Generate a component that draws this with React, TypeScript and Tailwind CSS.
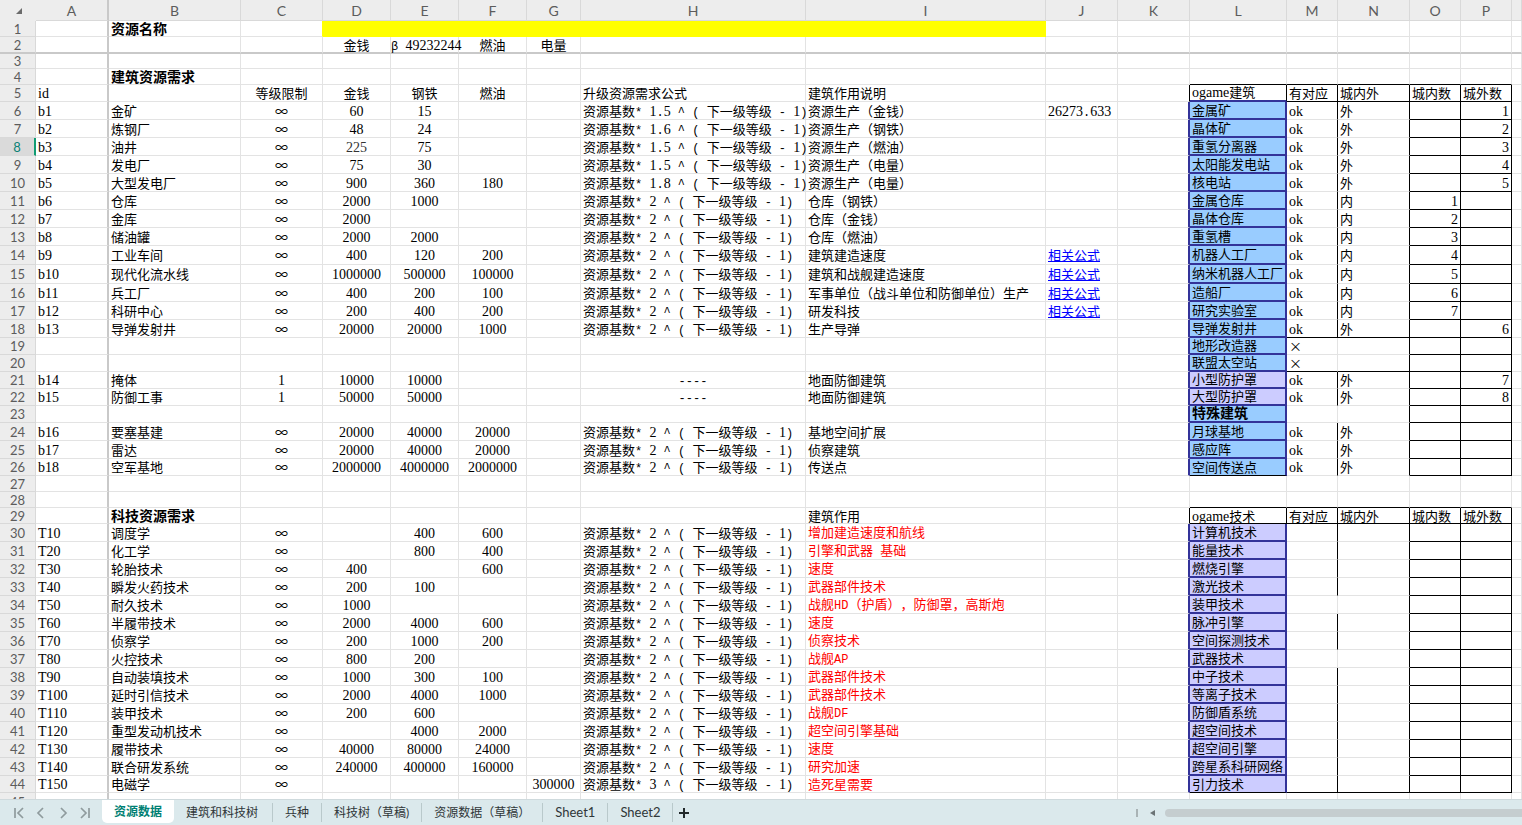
import React from "react";

type Cells = Record<string, string>;
type Row = { n: number; h: string; cells: Cells };

const COLUMNS = ["A", "B", "C", "D", "E", "F", "G", "H", "I", "J", "K", "L", "M", "N", "O", "P", ""];

const COL_WIDTH: Record<string, string> = {
  A: "w-[73px]",
  B: "w-[132px]",
  C: "w-[82px]",
  D: "w-[68px]",
  E: "w-[68px]",
  F: "w-[68px]",
  G: "w-[54px]",
  H: "w-[225px]",
  I: "w-[240px]",
  J: "w-[72px]",
  K: "w-[72px]",
  L: "w-[97px]",
  M: "w-[51px]",
  N: "w-[72px]",
  O: "w-[51px]",
  P: "w-[51px]",
};

const H15 = "h-[15px]";
const H16 = "h-[16px]";
const H17 = "h-[17px]";
const H18 = "h-[18px]";
const H19 = "h-[19px]";

const cost = (base: string) => `资源基数* ${base} ^ ( 下一级等级 - 1)`;
const C2 = cost("2");
const LINK = "相关公式";

const row = (n: number, h: string, cells: Cells = {}): Row => ({ n, h, cells });

const building = (
  n: number, h: string, A: string, B: string, D: string, E: string, F: string,
  H: string, I: string, L: string, N: string, O: string, P: string, J = "",
) => row(n, h, { A, B, C: "∞", D, E, F, H, I, J, L, M: "ok", N, O, P });

const tech = (
  n: number, h: string, A: string, B: string, D: string, E: string, F: string,
  I: string, L: string, G = "", H = C2,
) => row(n, h, { A, B, C: "∞", D, E, F, G, H, I, L });

const ROWS: Row[] = [
  row(1, H16, { B: "资源名称" }),
  row(2, H17, { D: "金钱", E: "β 49232244", F: "燃油", G: "电量" }),
  row(3, H15),
  row(4, H16, { B: "建筑资源需求" }),
  row(5, H17, {
    A: "id", C: "等级限制", D: "金钱", E: "钢铁", F: "燃油", H: "升级资源需求公式", I: "建筑作用说明",
    L: "ogame建筑", M: "有对应", N: "城内外", O: "城内数", P: "城外数",
  }),
  building(6, H18, "b1", "金矿", "60", "15", "", cost("1.5"), "资源生产（金钱）", "金属矿", "外", "", "1", "26273.633"),
  building(7, H18, "b2", "炼钢厂", "48", "24", "", cost("1.6"), "资源生产（钢铁）", "晶体矿", "外", "", "2"),
  building(8, H18, "b3", "油井", "225", "75", "", cost("1.5"), "资源生产（燃油）", "重氢分离器", "外", "", "3"),
  building(9, H18, "b4", "发电厂", "75", "30", "", cost("1.5"), "资源生产（电量）", "太阳能发电站", "外", "", "4"),
  building(10, H18, "b5", "大型发电厂", "900", "360", "180", cost("1.8"), "资源生产（电量）", "核电站", "外", "", "5"),
  building(11, H18, "b6", "仓库", "2000", "1000", "", C2, "仓库（钢铁）", "金属仓库", "内", "1", ""),
  building(12, H18, "b7", "金库", "2000", "", "", C2, "仓库（金钱）", "晶体仓库", "内", "2", ""),
  building(13, H18, "b8", "储油罐", "2000", "2000", "", C2, "仓库（燃油）", "重氢槽", "内", "3", ""),
  building(14, H19, "b9", "工业车间", "400", "120", "200", C2, "建筑建造速度", "机器人工厂", "内", "4", "", LINK),
  building(15, H19, "b10", "现代化流水线", "1000000", "500000", "100000", C2, "建筑和战舰建造速度", "纳米机器人工厂", "内", "5", "", LINK),
  building(16, H18, "b11", "兵工厂", "400", "200", "100", C2, "军事单位（战斗单位和防御单位）生产", "造船厂", "内", "6", "", LINK),
  building(17, H18, "b12", "科研中心", "200", "400", "200", C2, "研发科技", "研究实验室", "内", "7", "", LINK),
  building(18, H18, "b13", "导弹发射井", "20000", "20000", "1000", C2, "生产导弹", "导弹发射井", "外", "", "6"),
  row(19, H17, { L: "地形改造器", M: "×" }),
  row(20, H17, { L: "联盟太空站", M: "×" }),
  row(21, H17, { A: "b14", B: "掩体", C: "1", D: "10000", E: "10000", H: "----", I: "地面防御建筑", L: "小型防护罩", M: "ok", N: "外", P: "7" }),
  row(22, H17, { A: "b15", B: "防御工事", C: "1", D: "50000", E: "50000", H: "----", I: "地面防御建筑", L: "大型防护罩", M: "ok", N: "外", P: "8" }),
  row(23, H17, { L: "特殊建筑" }),
  building(24, H18, "b16", "要塞基建", "20000", "40000", "20000", C2, "基地空间扩展", "月球基地", "外", "", ""),
  building(25, H18, "b17", "雷达", "20000", "40000", "20000", C2, "侦察建筑", "感应阵", "外", "", ""),
  building(26, H17, "b18", "空军基地", "2000000", "4000000", "2000000", C2, "传送点", "空间传送点", "外", "", ""),
  row(27, H16),
  row(28, H16),
  row(29, H16, { B: "科技资源需求", I: "建筑作用", L: "ogame技术", M: "有对应", N: "城内外", O: "城内数", P: "城外数" }),
  tech(30, H18, "T10", "调度学", "", "400", "600", "增加建造速度和航线", "计算机技术"),
  tech(31, H18, "T20", "化工学", "", "800", "400", "引擎和武器 基础", "能量技术"),
  tech(32, H18, "T30", "轮胎技术", "400", "", "600", "速度", "燃烧引擎"),
  tech(33, H18, "T40", "瞬发火药技术", "200", "100", "", "武器部件技术", "激光技术"),
  tech(34, H18, "T50", "耐久技术", "1000", "", "", "战舰HD（护盾），防御罩，高斯炮", "装甲技术"),
  tech(35, H18, "T60", "半履带技术", "2000", "4000", "600", "速度", "脉冲引擎"),
  tech(36, H18, "T70", "侦察学", "200", "1000", "200", "侦察技术", "空间探测技术"),
  tech(37, H18, "T80", "火控技术", "800", "200", "", "战舰AP", "武器技术"),
  tech(38, H18, "T90", "自动装填技术", "1000", "300", "100", "武器部件技术", "中子技术"),
  tech(39, H18, "T100", "延时引信技术", "2000", "4000", "1000", "武器部件技术", "等离子技术"),
  tech(40, H18, "T110", "装甲技术", "200", "600", "", "战舰DF", "防御盾系统"),
  tech(41, H18, "T120", "重型发动机技术", "", "4000", "2000", "超空间引擎基础", "超空间技术"),
  tech(42, H18, "T130", "履带技术", "40000", "80000", "24000", "速度", "超空间引擎"),
  tech(43, H18, "T140", "联合研发系统", "240000", "400000", "160000", "研究加速", "跨星系科研网络"),
  tech(44, H17, "T150", "电磁学", "", "", "", "造死星需要", "引力技术", "300000", cost("3")),
  row(45, H18),
];

const within = (n: number, a: number, b: number) => n >= a && n <= b;

function rightBorder(n: number, c: string): string {
  const listBody = within(n, 6, 26) || within(n, 30, 44);
  const listHead = n === 5 || n === 29;
  if (c === "A") return "border-r-2 border-r-[#c9c9c9]";
  if (c === "C" && n === 1) return "border-r border-r-[#ffff00]";
  if ((c === "K" || c === "L") && listBody) return "border-r-2 border-r-[#333399]";
  if ((c === "K" || c === "L") && listHead) return "border-r border-r-black";
  if (c === "M") {
    const open = n === 19 || n === 20 || n === 23 || n === 34 || n === 37;
    if ((listBody || listHead) && !open) return "border-r border-r-black";
  }
  if ((c === "N" || c === "O" || c === "P") && (listBody || listHead)) return "border-r border-r-black";
  return "border-r border-r-[#e3e3e3]";
}

function bottomBorder(n: number, c: string): string {
  if (n === 2) return "border-b-2 border-b-[#c9c9c9]";
  const inBox = c !== "" && c >= "L";
  if (inBox && (n === 4 || n === 28 || n === 29 || n === 44)) return "border-b border-b-black";
  if (c === "L") {
    if (n === 26) return "border-b border-b-black";
    if (within(n, 5, 25) || within(n, 30, 43)) return "border-b-2 border-b-[#333399]";
  }
  if ((c === "M" || c === "N") && (n === 5 || n === 18 || n === 20)) return "border-b border-b-black";
  if ((c === "O" || c === "P") && (within(n, 5, 26) || within(n, 30, 43))) return "border-b border-b-black";
  return "border-b border-b-[#e3e3e3]";
}

function fill(n: number, c: string): string {
  if (c !== "L") return "";
  if (n === 21 || n === 22 || within(n, 30, 44)) return "bg-[#ccccff]";
  if (within(n, 6, 26)) return "bg-[#99ccff]";
  return "";
}

function align(n: number, c: string, text: string): string {
  if (c === "E" && n === 2) return "px-0 text-left";
  if ((c === "O" || c === "P") && n !== 5 && n !== 29) return "px-[2px] text-right";
  if (c === "C" || c === "D" || c === "E" || c === "F" || c === "G" || text === "----") return "px-0 text-center";
  return "px-[2px] text-left";
}

function tone(n: number, c: string): string {
  if (c === "I" && n >= 30) return "text-[#ff0000]";
  if (c === "D" && n === 8) return "text-[#333333]";
  return "text-black";
}

/** Rows of odd height and the coloured lists keep more room below their text. */
function leading(n: number, c: string, h: string): string {
  const list = c === "L" && n !== 5 && n !== 29;
  const note = c === "I" && n >= 30;
  const raised = list || note || h === H19 || (h === H17 && n !== 2);
  return raised ? "pt-0 pb-[2px] leading-[13px]" : "py-0 leading-[15px]";
}

const isHeading = (n: number, c: string) =>
  (c === "B" && (n === 1 || n === 4 || n === 29)) || (c === "L" && n === 23);

/** Sets digits and letters in a serif face and half-width marks in a fixed-width one. */
function Mixed({ text }: { text: string }) {
  const parts = text.match(/[0-9a-zT]+|[A-Zβ *.^()-]+|[^0-9a-zA-Zβ *.^()-]+/g) ?? [];
  return (
    <>
      {parts.map((p, i) => {
        if (/^[0-9a-zT]/.test(p))
          return <span key={i} className="font-['Liberation_Serif',serif] text-[14px] leading-[0px]">{p}</span>;
        if (/^[A-Zβ *.^()-]/.test(p))
          return <span key={i} className="font-['Liberation_Mono',monospace] text-[12px] leading-[0px]">{p}</span>;
        return <React.Fragment key={i}>{p}</React.Fragment>;
      })}
    </>
  );
}

function Cell({ n, c, h, text }: { n: number; c: string; h: string; text: string }) {
  const size = isHeading(n, c) ? "text-[14px] font-bold" : "text-[13px]";
  return (
    <td
      className={`align-middle whitespace-pre [text-spacing-trim:space-all] ${size} ${leading(n, c, h)} ${rightBorder(n, c)} ${bottomBorder(n, c)} ${fill(n, c)} ${align(n, c, text)} ${tone(n, c)}`}
    >
      {text === LINK ? (
        <a href="#formula" className="text-[#0000ff] underline underline-offset-1">{text}</a>
      ) : (
        <Mixed text={text} />
      )}
    </td>
  );
}

function Grid() {
  return (
    <table className="w-full table-fixed border-separate border-spacing-0 font-['Noto_Sans_CJK_SC',sans-serif]">
      <colgroup>
        <col className="w-[36px]" />
        {COLUMNS.map((c) => (
          <col key={c} className={COL_WIDTH[c]} />
        ))}
      </colgroup>
      <thead className="bg-[#ededed] font-['Lato',sans-serif] text-[14px] text-[#5c5c5c]">
        <tr className="h-[21px]">
          <th className="p-0 text-left">
            <button type="button" aria-label="全选" className="block pl-[16px]">
              <svg width="6" height="6" viewBox="0 0 6 6"><path d="M6 0V6H0Z" fill="#6b6b6b" /></svg>
            </button>
          </th>
          {COLUMNS.map((c) => (
            <th
              key={c}
              scope="col"
              className={`border-b border-b-[#d9d9d9] px-0 pt-[2px] pb-0 text-center leading-[18px] font-normal ${c === "A" ? "border-r-2 border-r-[#c9c9c9]" : "border-r border-r-[#d9d9d9]"}`}
            >
              {c}
            </th>
          ))}
        </tr>
      </thead>
      <tbody>
        {ROWS.map(({ n, h, cells }) => (
          <tr key={n} className={h}>
            <th
              scope="row"
              className={`p-0 text-center align-middle font-['Lato',sans-serif] text-[13px] leading-[14px] font-normal ${n === 8 ? "border-r-2 border-r-[#119c72] bg-[#dadada] text-[#0b8276]" : "border-r border-r-[#d9d9d9] bg-[#ededed] text-[#5c5c5c]"} ${n === 2 ? "border-b-2 border-b-[#c9c9c9]" : "border-b border-b-[#d9d9d9]"}`}
            >
              {n}
            </th>
            {COLUMNS.map((c) => {
              if (n === 1 && c === "D") return <td key={c} colSpan={6} className="bg-[#ffff00] p-0" />;
              if (n === 1 && c > "D" && c <= "I") return null;
              return <Cell key={c} n={n} c={c} h={h} text={cells[c] ?? ""} />;
            })}
          </tr>
        ))}
      </tbody>
    </table>
  );
}

function NavButton({ label, d }: { label: string; d: string }) {
  return (
    <button type="button" aria-label={label} className="flex w-[22px] justify-center">
      <svg width="12" height="12" viewBox="0 0 12 12" fill="none" stroke="#8f9b9d" strokeWidth="1.7">
        <path d={d} />
      </svg>
    </button>
  );
}

const TABS = ["建筑和科技树", "兵种", "科技树（草稿)", "资源数据（草稿）", "Sheet1", "Sheet2"];

function SheetBar() {
  return (
    <footer className="flex h-[26px] shrink-0 items-stretch border-t border-t-[#cfdadd] bg-[#dbe9ec] font-['Lato','Noto_Sans_CJK_SC',sans-serif] text-[12px] text-[#2f3638]">
      <div className="flex w-[102px] items-center pl-[8px]">
        <NavButton label="第一个工作表" d="M2 1V11M10 1L5 6L10 11" />
        <NavButton label="上一个工作表" d="M8 1L3 6L8 11" />
        <NavButton label="下一个工作表" d="M4 1L9 6L4 11" />
        <NavButton label="最后一个工作表" d="M2 1L7 6L2 11M10 1V11" />
      </div>
      <nav className="flex items-stretch">
        <button type="button" className="mb-[2px] rounded-b-[5px] bg-white px-[12px] font-bold text-[#007f73]">
          资源数据
        </button>
        {TABS.map((t, i) => (
          <button
            key={t}
            type="button"
            className={`my-[3px] border-r border-r-[#b9c9cb] pl-[12px] whitespace-nowrap ${i === 0 ? "pr-[14px]" : "pr-[12px]"}`}
          >
            <span className={t.startsWith("Sheet") ? "text-[13px]" : ""}>{t}</span>
          </button>
        ))}
        <button type="button" aria-label="新建工作表" className="px-[6px]">
          <svg width="10" height="10" viewBox="0 0 10 10" stroke="#22292b" strokeWidth="2"><path d="M5 0V10M0 5H10" /></svg>
        </button>
      </nav>
      <div className="ml-auto flex w-[386px] items-center">
        <span className="h-[8px] w-[2px] bg-[#a9b3b5]" />
        <button type="button" aria-label="向左滚动" className="pr-[10px] pl-[12px]">
          <svg width="5" height="6" viewBox="0 0 5 6"><path d="M5 0V6L0 3Z" fill="#6b7375" /></svg>
        </button>
        <span className="h-[8px] flex-1 rounded-l-full bg-[#c5cdcf]" />
      </div>
    </footer>
  );
}

export default function App() {
  return (
    <div className="flex h-screen flex-col overflow-hidden bg-white">
      <main className="min-h-0 flex-1 overflow-hidden">
        <Grid />
      </main>
      <SheetBar />
    </div>
  );
}
